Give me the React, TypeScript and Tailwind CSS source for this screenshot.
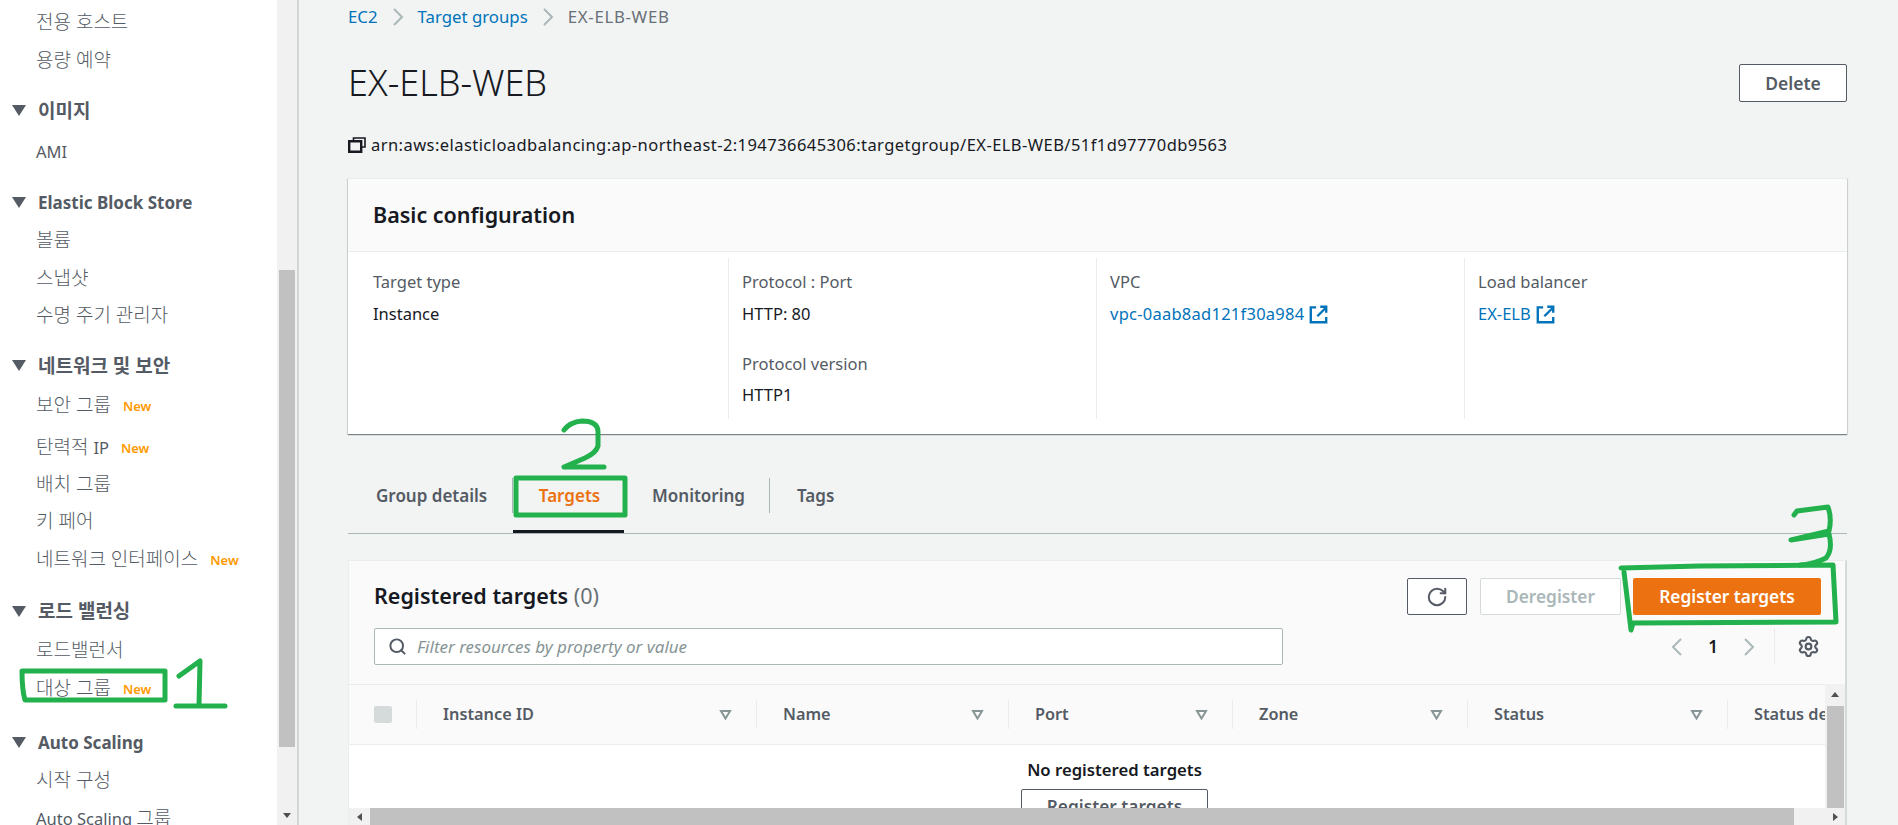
import { RotateCw, Search, Settings } from 'lucide-react';

const navGroups = [
  {
    title: null,
    box: '',
    items: [{ label: '전용 호스트' }, { label: '용량 예약' }],
  },
  { title: '이미지', box: 'mt-[13px]', list: 'pt-[3.5px]', items: [{ label: 'AMI' }] },
  {
    title: 'Elastic Block Store',
    box: 'mt-[13px]',
    items: [{ label: '볼륨' }, { label: '스냅샷' }, { label: '수명 주기 관리자' }],
  },
  {
    title: '네트워크 및 보안',
    box: 'mt-[13px]',
    list: 'pt-[1.3px]',
    items: [
      { label: '보안 그룹', isNew: true },
      { label: '탄력적 IP', isNew: true, row: 'mt-[4.6px]' },
      { label: '배치 그룹' },
      { label: '키 페어' },
      { label: '네트워크 인터페이스', isNew: true },
    ],
  },
  {
    title: '로드 밸런싱',
    box: 'mt-[15px]',
    list: 'pt-[1.3px]',
    items: [{ label: '로드밸런서' }, { label: '대상 그룹', isNew: true }],
  },
  {
    title: 'Auto Scaling',
    box: 'mt-[17px]',
    items: [{ label: '시작 구성' }, { label: 'Auto Scaling 그룹' }],
  },
];

const columns = [
  { label: 'Instance ID', width: 'w-[340px]' },
  { label: 'Name', width: 'w-[252px]' },
  { label: 'Port', width: 'w-[224px]' },
  { label: 'Zone', width: 'w-[235px]' },
  { label: 'Status', width: 'w-[260px]' },
];

// hangul runs render bigger than latin in the sidebar
function Mixed({ text, size }: { text: string; size: string }) {
  return (
    <span className="whitespace-pre">
      {text.split(/([가-힣][가-힣 ]*)/).map((part, i) =>
        /[가-힣]/.test(part) ? (
          <span key={i} className={size}>
            {part}
          </span>
        ) : (
          part
        )
      )}
    </span>
  );
}

function Chevron({ dir = 'right', className }: { dir?: 'left' | 'right'; className?: string }) {
  return (
    <svg viewBox="0 0 12 18" className={`h-[18px] w-[12px] shrink-0 ${className}`} fill="none" stroke="#aab7b8" strokeWidth="2">
      <path d={dir === 'right' ? 'M2 1l8 8-8 8' : 'M10 1L2 9l8 8'} />
    </svg>
  );
}

function CopyIcon() {
  return (
    <svg viewBox="0 0 18 16" className="mr-[5px] h-[16px] w-[18px] shrink-0" fill="none" stroke="#16191f">
      <path d="M5.5 3.5V1H17v9h-3" strokeWidth="1.6" />
      <path d="M1.2 4.2h12v10.6h-12z" strokeWidth="2.4" />
    </svg>
  );
}

function ExternalLink() {
  return (
    <svg viewBox="0 0 16 16" className="ml-[5px] h-[19px] w-[19px] shrink-0" fill="none" stroke="#0073bb" strokeWidth="2">
      <path d="M6 2H1.5v12.5h13V10" />
      <path d="M7 9.5 14 2.5M9.5 1.5h5v5" />
    </svg>
  );
}

function FilterIcon() {
  return (
    <svg viewBox="0 0 12 10" className="h-[10px] w-[13px] shrink-0" fill="none" stroke="#879596" strokeWidth="2">
      <path d="M1.5 1h9L6 8.5z" />
    </svg>
  );
}

function Arrow({ dir }: { dir: 'up' | 'down' | 'left' | 'right' }) {
  const d = {
    up: 'M1 7h8L5 2z',
    down: 'M1 3h8L5 8z',
    left: 'M7 1v8L2 5z',
    right: 'M3 1v8l5-4z',
  }[dir];
  return (
    <svg viewBox="0 0 10 10" className="h-[10px] w-[10px]" fill="#505050">
      <path d={d} />
    </svg>
  );
}

function Sidebar() {
  return (
    <div className="flex h-full w-[299px] shrink-0 border-r-2 border-[#d5d5d5]">
      <nav className="h-full w-[277px] overflow-hidden bg-white pt-[4px] text-[16.5px] text-[#545b64]">
        {navGroups.map((group, i) => (
          <div key={i} className={group.box}>
            {group.title && (
              <div className="flex h-[38px] items-center text-[17px] font-bold whitespace-nowrap">
                <span className="mx-[12px] h-0 w-0 border-x-[7px] border-t-[11px] border-x-transparent border-t-[#545b64]" />
                <Mixed text={group.title} size="text-[19px]" />
              </div>
            )}
            <div className={group.list}>
              {group.items.map((item) => (
                <div key={item.label} className={`flex h-[37.4px] items-center pl-[36px] whitespace-nowrap ${item.row ?? ''}`}>
                  <Mixed text={item.label} size="text-[19px] font-light" />
                  {item.isNew && <span className="ml-[12px] mt-[3px] text-[13px] font-semibold text-[#ff9900]">New</span>}
                </div>
              ))}
            </div>
          </div>
        ))}
      </nav>
      <div className="flex h-full w-[20px] flex-col bg-[#f1f1f1]">
        <div className="mx-[2px] mt-[270px] h-[477px] bg-[#c1c1c1]" />
        <div className="mt-auto flex h-[20px] items-center justify-center">
          <Arrow dir="down" />
        </div>
      </div>
    </div>
  );
}

function BasicConfig() {
  return (
    <section className="mt-[20px] h-[256px] border-t border-[#eaeded] bg-white shadow-[0_1px_1px_0_rgba(0,28,36,0.4),1px_1px_1px_0_rgba(0,28,36,0.1),-1px_1px_1px_0_rgba(0,28,36,0.1)]">
      <h2 className="flex h-[73px] items-center border-b border-[#eaeded] bg-[#fafafa] pl-[25px] text-[21.5px] font-semibold text-[#16191f]">
        Basic configuration
      </h2>
      <div className="mt-[6px] flex h-[161px] text-[16.5px] leading-[20px]">
        <div className="w-[381px] border-r border-[#eaeded] pl-[25px] pt-[14px]">
          <div className="text-[#545b64]">Target type</div>
          <div className="mt-[12px] text-[#16191f]">Instance</div>
        </div>
        <div className="w-[368px] border-r border-[#eaeded] pl-[13px] pt-[14px]">
          <div className="text-[#545b64]">Protocol : Port</div>
          <div className="mt-[12px] text-[#16191f]">HTTP: 80</div>
          <div className="mt-[30px] text-[#545b64]">Protocol version</div>
          <div className="mt-[11px] text-[#16191f]">HTTP1</div>
        </div>
        <div className="w-[368px] border-r border-[#eaeded] pl-[13px] pt-[14px]">
          <div className="text-[#545b64]">VPC</div>
          <div className="mt-[12px] flex items-center tracking-[0.25px] text-[#0073bb]">
            vpc-0aab8ad121f30a984
            <ExternalLink />
          </div>
        </div>
        <div className="pl-[13px] pt-[14px]">
          <div className="text-[#545b64]">Load balancer</div>
          <div className="mt-[12px] flex items-center text-[#0073bb]">
            EX-ELB
            <ExternalLink />
          </div>
        </div>
      </div>
    </section>
  );
}

function Tabs() {
  return (
    <div className="mt-[44px] flex h-[56px] border-b border-[#aab7b8] text-[17px] font-semibold text-[#545b64]">
      <div className="flex h-[35px] w-[165px] items-center border-r border-[#aab7b8] pl-[28px]">Group details</div>
      <div className="flex h-[55px] w-[111px] justify-center border-b-[3px] border-[#16191f] pl-[2px] text-[#ec7211]">
        <span className="flex h-[35px] items-center">Targets</span>
      </div>
      <div className="flex h-[35px] w-[146px] items-center border-r border-[#aab7b8] pl-[28px]">Monitoring</div>
      <div className="flex h-[35px] items-center pl-[27px]">Tags</div>
    </div>
  );
}

function TargetsTable() {
  return (
    <div className="flex min-h-0 flex-1 flex-col">
      <div className="flex min-h-0 flex-1">
        <div className="min-w-0 flex-1 overflow-hidden">
          <div className="flex h-[61px] items-center border-y border-[#eaeded] bg-[#fafafa] text-[16.3px] font-semibold whitespace-nowrap text-[#545b64]">
            <div className="flex h-[29px] w-[68px] shrink-0 items-center border-r border-[#eaeded] pl-[25px]">
              <span className="h-[17px] w-[18px] rounded-[2px] bg-[#d5dbdb]" />
            </div>
            {columns.map((col) => (
              <div key={col.label} className={`flex h-[29px] shrink-0 items-center justify-between border-r border-[#eaeded] pl-[26px] pr-[24px] ${col.width}`}>
                {col.label}
                <FilterIcon />
              </div>
            ))}
            <div className="shrink-0 pl-[26px]">Status details</div>
          </div>
          <div className="flex flex-col items-center bg-white pl-[55px] pt-[15px]">
            <div className="text-[16.7px] leading-[20px] font-semibold text-[#16191f]">No registered targets</div>
            <button className="mt-[9px] h-[36px] w-[187px] rounded-[2px] border border-[#545b64] bg-white text-[17.3px] font-semibold text-[#545b64]">
              Register targets
            </button>
          </div>
        </div>
        <div className="flex w-[20px] shrink-0 flex-col items-center bg-[#f1f1f1]">
          <div className="flex h-[22px] items-center">
            <Arrow dir="up" />
          </div>
          <div className="w-[17px] flex-1 bg-[#c1c1c1]" />
        </div>
      </div>
      <div className="flex h-[18px] shrink-0 items-center bg-[#f1f1f1]">
        <div className="flex w-[21px] justify-center">
          <Arrow dir="left" />
        </div>
        <div className="h-full w-[1424px] bg-[#c1c1c1]" />
        <div className="ml-auto flex w-[21px] justify-center">
          <Arrow dir="right" />
        </div>
      </div>
    </div>
  );
}

function RegisteredTargets() {
  return (
    <section className="mt-[26px] flex h-[267px] flex-col border border-r-2 border-[#eaeded] border-r-[#d5dbdb] bg-[#fafafa]">
      <div className="mt-[17px] flex h-[37px] shrink-0 items-center justify-between pl-[25px] pr-[24px]">
        <h2 className="text-[21.5px] font-semibold text-[#16191f]">
          Registered targets <span className="font-normal text-[#687078]">(0)</span>
        </h2>
        <div className="flex items-center gap-[12px] text-[17.3px] font-semibold">
          <button className="mr-[1px] flex h-[37px] w-[60px] items-center justify-center rounded-[2px] border border-[#545b64] bg-white text-[#545b64]">
            <RotateCw className="h-[22px] w-[22px]" strokeWidth={2.2} />
          </button>
          <button className="h-[37px] w-[141px] rounded-[2px] border border-[#d5dbdb] bg-white text-[#aab7b8]">Deregister</button>
          <button className="h-[37px] w-[188px] rounded-[2px] bg-[#ec7211] text-white">Register targets</button>
        </div>
      </div>
      <div className="mt-[13px] flex h-[37px] shrink-0 items-center justify-between pl-[25px] pr-[24px]">
        <div className="flex h-[37px] w-[909px] items-center rounded-[2px] border border-[#aab7b8] bg-white pl-[13px] text-[17px] text-[#879596] italic">
          <Search className="mr-[10px] h-[19px] w-[19px] text-[#545b64]" strokeWidth={2.5} />
          Filter resources by property or value
        </div>
        <div className="flex items-center">
          <Chevron dir="left" />
          <span className="w-[60px] text-center text-[17px] font-semibold text-[#16191f]">1</span>
          <Chevron />
          <div className="ml-[19px] flex h-[37px] w-[47px] items-center justify-end border-l border-[#eaeded] pr-[1px] text-[#545b64]">
            <Settings className="h-[23px] w-[23px]" strokeWidth={2.2} />
          </div>
        </div>
      </div>
      <div className="mt-[19px] flex min-h-0 flex-1 flex-col">
        <TargetsTable />
      </div>
    </section>
  );
}

// hand drawn marks on top of the screenshot
function Annotations() {
  return (
    <svg className="pointer-events-none absolute inset-0 h-full w-full" viewBox="0 0 1898 825" fill="none" stroke="#22b14c" strokeWidth="5" strokeLinecap="round" strokeLinejoin="round">
      <path d="M22 671 H165 V700 H25 Q22 690 22 671z" />
      <path d="M179 676 L200 661 L199 705 M176 706 H225" />
      <path d="M516 478 H625 V515 H516 z" />
      <path d="M564 430 Q570 422 582 421 Q598 421 598 432 V446 Q596 453 585 458 L564 467 H604" />
      <path d="M1621 568 L1700 566 L1833 565 L1836 622 L1633 623 L1631 630 L1624 572" />
      <path d="M1794 515 L1797 511 L1828 507 Q1832 518 1829 531 L1791 540 L1829 534 Q1833 550 1826 558 Q1815 564 1800 565" />
    </svg>
  );
}

export default function App() {
  return (
    <div className="relative flex h-[825px] w-[1898px] overflow-hidden bg-[#f2f3f3] font-['Noto_Sans','Noto_Sans_CJK_KR',sans-serif]">
      <Sidebar />
      <main className="min-w-0 flex-1 pl-[49px] pr-[51px]">
        <div className="flex h-[34px] items-center text-[16.8px]">
          <span className="text-[#0073bb]">EC2</span>
          <Chevron className="mx-[14px]" />
          <span className="text-[#0073bb]">Target groups</span>
          <Chevron className="mx-[14px]" />
          <span className="tracking-[0.7px] text-[#687078]">EX-ELB-WEB</span>
        </div>
        <div className="mt-[30px] flex h-[38px] items-center justify-between">
          <h1 className="text-[36px] font-light text-[#16191f]">EX-ELB-WEB</h1>
          <button className="h-[38px] w-[108px] rounded-[2px] border border-[#545b64] bg-white text-[17.5px] font-semibold text-[#545b64]">
            Delete
          </button>
        </div>
        <div className="mt-[30px] flex h-[26px] items-center text-[16.5px] tracking-[0.44px] text-[#16191f]">
          <CopyIcon />
          arn:aws:elasticloadbalancing:ap-northeast-2:194736645306:targetgroup/EX-ELB-WEB/51f1d97770db9563
        </div>
        <BasicConfig />
        <Tabs />
        <RegisteredTargets />
      </main>
      <Annotations />
    </div>
  );
}
